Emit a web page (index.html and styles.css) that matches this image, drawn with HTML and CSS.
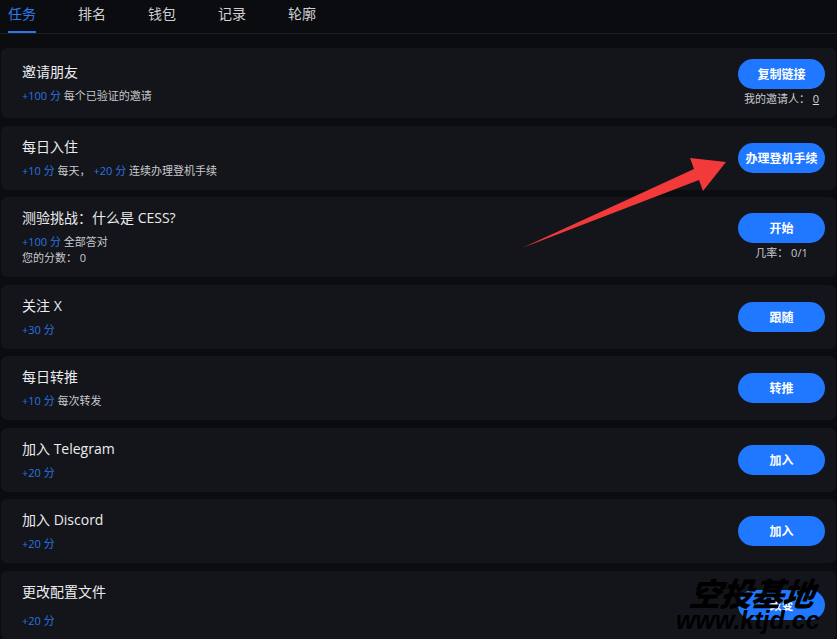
FILE: index.html
```html
<!DOCTYPE html>
<html lang="zh">
<head>
<meta charset="utf-8">
<title>任务</title>
<link rel="stylesheet" href="styles.css">
</head>
<body>
<nav class="tabs">
  <a class="tab active">任务</a>
  <a class="tab">排名</a>
  <a class="tab">钱包</a>
  <a class="tab">记录</a>
  <a class="tab">轮廓</a>
</nav>
<main class="tasks">
  <div class="card">
    <div class="info">
      <div class="title">邀请朋友</div>
      <div class="sub"><span class="pts">+100 分</span> 每个已验证的邀请</div>
    </div>
    <div class="action">
      <button class="btn">复制链接</button>
      <div class="note">我的邀请人： <u>0</u></div>
    </div>
  </div>
  <div class="card">
    <div class="info">
      <div class="title">每日入住</div>
      <div class="sub"><span class="pts">+10 分</span> 每天， <span class="pts">+20 分</span> 连续办理登机手续</div>
    </div>
    <div class="action">
      <button class="btn">办理登机手续</button>
    </div>
  </div>
  <div class="card">
    <div class="info">
      <div class="title">测验挑战：什么是 CESS?</div>
      <div class="sub"><span class="pts">+100 分</span> 全部答对</div>
      <div class="sub2">您的分数： 0</div>
    </div>
    <div class="action">
      <button class="btn">开始</button>
      <div class="note">几率： 0/1</div>
    </div>
  </div>
  <div class="card">
    <div class="info">
      <div class="title">关注 X</div>
      <div class="sub"><span class="pts">+30 分</span></div>
    </div>
    <div class="action"><button class="btn">跟随</button></div>
  </div>
  <div class="card">
    <div class="info">
      <div class="title">每日转推</div>
      <div class="sub"><span class="pts">+10 分</span> 每次转发</div>
    </div>
    <div class="action"><button class="btn">转推</button></div>
  </div>
  <div class="card">
    <div class="info">
      <div class="title">加入 Telegram</div>
      <div class="sub"><span class="pts">+20 分</span></div>
    </div>
    <div class="action"><button class="btn">加入</button></div>
  </div>
  <div class="card">
    <div class="info">
      <div class="title">加入 Discord</div>
      <div class="sub"><span class="pts">+20 分</span></div>
    </div>
    <div class="action"><button class="btn">加入</button></div>
  </div>
  <div class="card">
    <div class="info">
      <div class="title">更改配置文件</div>
      <div class="sub wide"><span class="pts">+20 分</span></div>
    </div>
    <div class="action"><button class="btn">改变</button></div>
  </div>
</main>
<svg class="arrow" width="837" height="639" viewBox="0 0 837 639">
  <polygon points="522,248 694,169 690,158 726,162 703,191 699,180" fill="#f23a3a"/>
</svg>
<div class="watermark">
  <div class="wm-cn">空投基地</div>
  <div class="wm-en">www.ktjd.cc</div>
</div>
</body>
</html>
```

FILE: styles.css
```css
html, body {
  margin: 0;
  padding: 0;
  background: #0b0c10;
  overflow: hidden;
  height: 639px;
}
body {
  font-family: "Open Sans", "Noto Sans CJK SC", sans-serif;
  color: #e8e8ea;
  position: relative;
}
.tabs {
  display: flex;
  gap: 42px;
  padding: 0 8px;
  height: 33px;
  border-bottom: 1px solid #1d1e24;
}
.tab {
  position: relative;
  font-size: 14px;
  line-height: 28px;
  color: #cfd0d3;
  cursor: pointer;
}
.tab.active {
  color: #2b7be8;
}
.tab.active::after {
  content: "";
  position: absolute;
  left: 0;
  right: 0;
  bottom: 0;
  height: 2px;
  background: #2a78e6;
}
.tasks {
  display: flex;
  flex-direction: column;
  gap: 7.5px;
  padding: 14px 1px 0 1px;
}
.card {
  display: flex;
  align-items: center;
  justify-content: space-between;
  background: #13151a;
  border-radius: 6px;
  padding: 11px 11px 11px 21px;
  flex-shrink: 0;
}
.info {
  display: flex;
  flex-direction: column;
}
.title {
  font-size: 14px;
  line-height: 20px;
  color: #ececee;
}
.sub {
  margin-top: 6px;
  font-size: 11px;
  line-height: 16px;
  color: #c9cacd;
}
.sub.wide {
  margin-top: 11px;
}
.sub2 {
  font-size: 11px;
  line-height: 16px;
  color: #c9cacd;
}
.pts {
  color: #2a74e0;
}
.action {
  display: flex;
  flex-direction: column;
  align-items: center;
}
.btn {
  min-width: 87px;
  height: 30px;
  padding: 0 7px;
  border: none;
  border-radius: 15px;
  background: #1f78ff;
  color: #fff;
  font-family: "Open Sans", "Noto Sans CJK SC", sans-serif;
  font-size: 12px;
  font-weight: 600;
}
.note {
  margin-top: 2px;
  font-size: 11px;
  line-height: 16px;
  color: #c9cacd;
}
.note u {
  color: #d8d8da;
}
.arrow {
  position: absolute;
  left: 0;
  top: 0;
  pointer-events: none;
}
.watermark {
  position: absolute;
  left: 676px;
  top: 576px;
  width: 161px;
  color: #000;
  font-style: italic;
  font-weight: 900;
  line-height: 1;
  white-space: nowrap;
  pointer-events: none;
}
.wm-cn {
  font-family: "Noto Sans CJK SC", sans-serif;
  font-size: 32px;
  letter-spacing: -1px;
  margin-left: 14px;
  transform: skewX(-8deg);
}
.wm-en {
  font-family: "Liberation Sans", sans-serif;
  font-weight: 700;
  font-size: 25px;
  margin-top: 0;
}
```
